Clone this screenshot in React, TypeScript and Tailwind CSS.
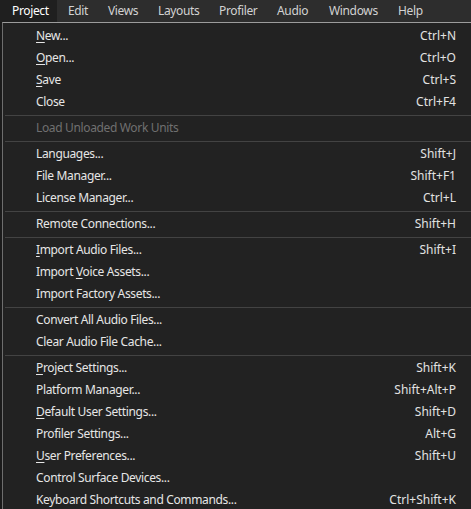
import React from "react";

type Item = { label: string; key?: string; u?: number; disabled?: boolean } | "sep";

const menuBar = [
  { label: "Project", w: "w-[57px] pl-[12px]", active: true },
  { label: "Edit", w: "w-[40px] pl-[11px]" },
  { label: "Views", w: "w-[50px] pl-[11px]" },
  { label: "Layouts", w: "w-[61px] pl-[11px]" },
  { label: "Profiler", w: "w-[58px] pl-[11px]" },
  { label: "Audio", w: "w-[52px] pl-[11px]" },
  { label: "Windows", w: "w-[69px] pl-[11px]" },
  { label: "Help", w: "w-[60px] pl-[11px]" },
];

const items: Item[] = [
  { label: "New...", key: "Ctrl+N", u: 0 },
  { label: "Open...", key: "Ctrl+O", u: 0 },
  { label: "Save", key: "Ctrl+S", u: 0 },
  { label: "Close", key: "Ctrl+F4" },
  "sep",
  { label: "Load Unloaded Work Units", disabled: true },
  "sep",
  { label: "Languages...", key: "Shift+J" },
  { label: "File Manager...", key: "Shift+F1" },
  { label: "License Manager...", key: "Ctrl+L" },
  "sep",
  { label: "Remote Connections...", key: "Shift+H" },
  "sep",
  { label: "Import Audio Files...", key: "Shift+I", u: 0 },
  { label: "Import Voice Assets...", u: 7 },
  { label: "Import Factory Assets..." },
  "sep",
  { label: "Convert All Audio Files..." },
  { label: "Clear Audio File Cache..." },
  "sep",
  { label: "Project Settings...", key: "Shift+K", u: 0 },
  { label: "Platform Manager...", key: "Shift+Alt+P" },
  { label: "Default User Settings...", key: "Shift+D", u: 0 },
  { label: "Profiler Settings...", key: "Alt+G" },
  { label: "User Preferences...", key: "Shift+U", u: 0 },
  { label: "Control Surface Devices..." },
  { label: "Keyboard Shortcuts and Commands...", key: "Ctrl+Shift+K" },
];

function Label({ text, u }: { text: string; u?: number }) {
  if (u === undefined) return <>{text}</>;
  return (
    <>
      {text.slice(0, u)}
      <span className="underline underline-offset-2">{text[u]}</span>
      {text.slice(u + 1)}
    </>
  );
}

export default function App() {
  return (
    <div
      className="w-[471px] h-[509px] overflow-hidden bg-[#1b1b1b] text-[12px] tracking-[-0.35px] text-[#e6e6e6]"
      style={{ fontFamily: '"Noto Sans", "Open Sans", sans-serif' }}
    >
      {/* menu bar */}
      <div className="flex h-[22px] bg-[#2d2d2d]">
        {menuBar.map((m) => (
          <div
            key={m.label}
            className={`${m.w} shrink-0 flex items-center ${
              m.active ? "bg-[#1f1f1f] text-white" : "text-[#d2d2d2]"
            }`}
          >
            {m.label}
          </div>
        ))}
      </div>

      {/* dropdown */}
      <div className="ml-[2px] h-full border-l border-t border-l-[#6e6e6e] border-t-[#9c9c9c] bg-[#222222] pt-[2px]">
        {items.map((it, i) =>
          it === "sep" ? (
            <div key={i} className="h-[4px] flex items-center pl-[2px]">
              <div className="h-px w-full bg-[#434343]" />
            </div>
          ) : (
            <div
              key={i}
              className={`flex h-[22px] items-center justify-between pl-[33px] pr-[15px] ${
                it.disabled ? "text-[#707070]" : ""
              }`}
            >
              <span>
                <Label text={it.label} u={it.u} />
              </span>
              {it.key && <span className="tracking-normal text-[#e2e2e2]">{it.key}</span>}
            </div>
          )
        )}
      </div>
    </div>
  );
}
